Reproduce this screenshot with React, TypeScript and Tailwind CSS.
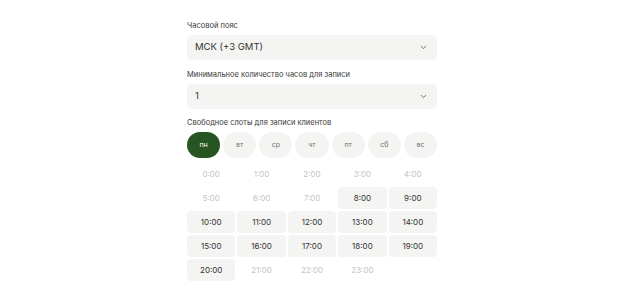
import React from 'react';
import { ChevronDown } from 'lucide-react';

const days = ['пн', 'вт', 'ср', 'чт', 'пт', 'сб', 'вс'];

// hours that can be booked
const available = new Set([8, 9, 10, 11, 12, 13, 14, 15, 16, 17, 18, 19, 20]);

const Select: React.FC<{ value: string }> = ({ value }) => (
  <div className="flex h-[25px] items-center justify-between rounded-[5px] bg-[#f4f4f2] pl-2 pr-[9px]">
    <span className="text-[9.5px] text-[#333]">{value}</span>
    <ChevronDown className="h-[9px] w-[9px] text-[#555]" strokeWidth={2.2} />
  </div>
);

const Label: React.FC<{ children: React.ReactNode }> = ({ children }) => (
  <p className="mb-[4px] text-[7.5px] leading-[10px] text-[#3a3a3a]">{children}</p>
);

export default function App() {
  const hours = Array.from({ length: 24 }, (_, i) => i);

  return (
    <div className="min-h-[300px] bg-white pt-[21px] font-['Inter',sans-serif]">
      <div className="mx-auto w-[250px]">
        <Label>Часовой пояс</Label>
        <Select value="МСК (+3 GMT)" />

        <div className="mt-[10px]">
          <Label>Минимальное количество часов для записи</Label>
          <Select value="1" />
        </div>

        <div className="mt-[9px]">
          <Label>Свободное слоты для записи клиентов</Label>
          <div className="grid grid-cols-7 gap-[3px]">
            {days.map((d, i) => (
              <div
                key={d}
                className={
                  i === 0
                    ? 'flex h-[26px] items-center justify-center rounded-full bg-[#265522] text-[7px] text-white'
                    : 'flex h-[26px] items-center justify-center rounded-full bg-[#f4f4f2] text-[7px] text-[#707070]'
                }
              >
                {d}
              </div>
            ))}
          </div>

          <div className="mt-[5px] grid grid-cols-5 gap-[2px]">
            {hours.map((h) => (
              <div
                key={h}
                className={
                  available.has(h)
                    ? 'flex h-[22px] items-center justify-center rounded-[4px] bg-[#f4f4f2] text-[8px] text-[#333]'
                    : 'flex h-[22px] items-center justify-center text-[8px] text-[#c4c4c4]'
                }
              >
                {h}:00
              </div>
            ))}
          </div>
        </div>
      </div>
    </div>
  );
}
